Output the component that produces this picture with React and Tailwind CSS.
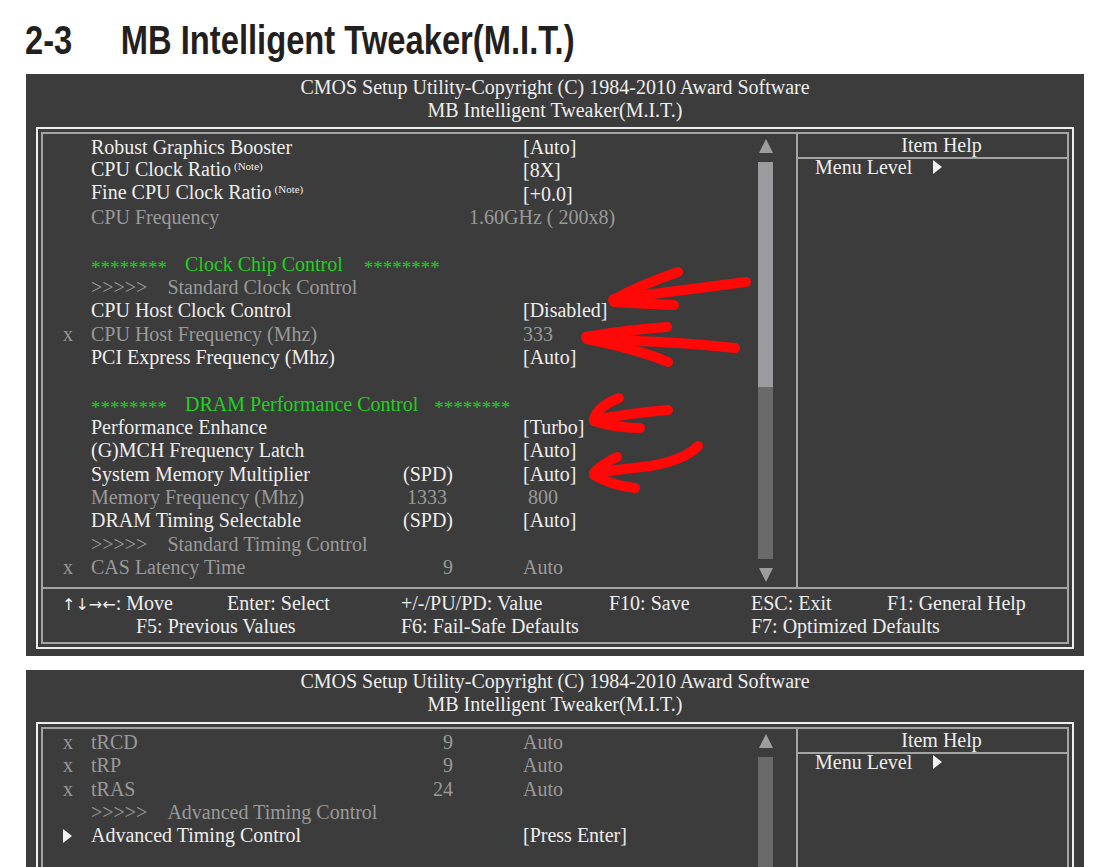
import React from "react";

const WHITE = "text-[#eeeeee]";
const GREY = "text-[#9a9a9a]";
const GREEN = "text-[#1ed21e]";

function TriRight({ className = "" }) {
  return (
    <svg className={className} width="9" height="14" viewBox="0 0 9 14">
      <path d="M0 0 L9 7 L0 14 Z" fill="#f2f2f2" />
    </svg>
  );
}

function Row({ marker, label, note, mid, midCls = "", value, valCls = "", tone = "w" }) {
  const c = tone === "g" ? GREY : WHITE;
  return (
    <div className={`flex h-[23.33px] items-center leading-[23.33px] whitespace-nowrap ${c}`}>
      <div className="w-[20px]" />
      <div className="flex w-[28px] items-center">
        {marker === "x" ? "x" : marker === "tri" ? <TriRight /> : null}
      </div>
      <div className="w-[289px]">
        {label}
        {note && <span className="relative -top-[6px] ml-[3px] text-[11px]">(Note)</span>}
      </div>
      <div className={`w-[73px] text-right ${midCls}`}>{mid}</div>
      <div className="w-[70px]" />
      <div className={valCls}>{value}</div>
    </div>
  );
}

function GreenRow({ title, gap }) {
  return (
    <div className={`flex h-[23.33px] items-center leading-[23.33px] whitespace-nowrap ${GREEN}`}>
      <div className="w-[48px]" />
      <span className="relative top-[3px] text-[19px]">********</span>
      <span className="ml-[18px]">{title}</span>
      <span className={`relative top-[3px] text-[19px] ${gap}`}>********</span>
    </div>
  );
}

function SubRow({ title }) {
  return (
    <div className={`flex h-[23.33px] items-center leading-[23.33px] whitespace-nowrap ${GREY}`}>
      <div className="w-[48px]" />
      <span>&gt;&gt;&gt;&gt;&gt;</span>
      <span className="ml-[20px]">{title}</span>
    </div>
  );
}

function Blank() {
  return <div className="h-[23.33px]" />;
}

function Scroll({ thumbCls }) {
  return (
    <div className="flex w-[15px] flex-col items-center pt-[5px]">
      <svg width="14" height="14" viewBox="0 0 14 14">
        <path d="M7 0 L14 14 L0 14 Z" fill="#9d9d9d" />
      </svg>
      <div className="mt-[9px] flex h-[397px] w-[15px] flex-col bg-[#6a6a6a]">
        <div className={`w-full bg-[#9c9c9f] ${thumbCls}`} />
      </div>
      <svg className="mt-[9px]" width="14" height="14" viewBox="0 0 14 14">
        <path d="M0 0 L14 0 L7 14 Z" fill="#9d9d9d" />
      </svg>
    </div>
  );
}

function Help() {
  return (
    <div className={`flex flex-1 flex-col border-l-2 border-[#a3a3a3] ${WHITE}`}>
      <div className="h-[25px] border-b-2 border-[#a3a3a3] pl-[18px] text-center leading-[23px]">
        Item Help
      </div>
      <div className="flex h-[16px] items-center pl-[17px] leading-[16px]">
        <span>Menu Level</span>
        <TriRight className="ml-[21px]" />
      </div>
    </div>
  );
}

function Panel({ headCls, gapCls, rows, thumbCls, footer, bodyCls }) {
  return (
    <div className={`ml-[26px] w-[1058px] bg-[#3c3c3c] px-[10px] pb-[7px] ${headCls}`}>
      <div className={`text-center leading-[23px] ${WHITE}`}>
        <div>CMOS Setup Utility-Copyright (C) 1984-2010 Award Software</div>
        <div>MB Intelligent Tweaker(M.I.T.)</div>
      </div>
      <div className={`${gapCls} border-2 border-[#ededed] p-[3px]`}>
        <div className="border-2 border-[#a3a3a3]">
          <div className={`flex ${bodyCls}`}>
            <div className="w-[715px] pt-[2px]">{rows}</div>
            <Scroll thumbCls={thumbCls} />
            <div className="w-[23px]" />
            <Help />
          </div>
          {footer && (
            <div className={`border-t-2 border-[#a3a3a3] pt-[3px] pb-[4px] leading-[23px] whitespace-nowrap ${WHITE}`}>
              <div className="flex h-[23px] pl-[19px]">
                <span className="w-[165px]">
                  <span className="font-['DejaVu_Sans',sans-serif] text-[16px]">↑↓→←</span>: Move
                </span>
                <span className="w-[174px]">Enter: Select</span>
                <span className="w-[208px]">+/-/PU/PD: Value</span>
                <span className="w-[142px]">F10: Save</span>
                <span className="w-[136px]">ESC: Exit</span>
                <span>F1: General Help</span>
              </div>
              <div className="flex h-[23px] pl-[93px]">
                <span className="w-[265px]">F5: Previous Values</span>
                <span className="w-[350px]">F6: Fail-Safe Defaults</span>
                <span>F7: Optimized Defaults</span>
              </div>
            </div>
          )}
        </div>
      </div>
    </div>
  );
}

function RedArrows() {
  const s = {
    stroke: "#ff0808",
    strokeWidth: 10,
    fill: "none",
    strokeLinecap: "round",
    strokeLinejoin: "round",
  };
  return (
    <svg className="pointer-events-none absolute left-0 top-0" width="1112" height="867" viewBox="0 0 1112 867">
      <g {...s}>
        <path d="M746 282 Q 690 289 614 299" />
        <path d="M678 272 Q 640 285 613 300" />
        <path d="M614 302 Q 645 304 674 305" />

        <path d="M735 348 Q 690 343 640 341 Q 610 339 586 337" />
        <path d="M667 327 Q 625 330 586 337" />
        <path d="M587 339 Q 640 350 668 362" />

        <path d="M668 410 Q 630 413 595 420" />
        <path d="M619 398 Q 600 405 594 418" />
        <path d="M594 421 Q 615 428 640 428" />

        <path d="M698 446 Q 685 460 650 466 Q 615 470 594 473" />
        <path d="M617 457 Q 602 464 594 473" />
        <path d="M594 475 Q 610 485 635 488" />
      </g>
    </svg>
  );
}

export default function App() {
  const rows1 = (
    <>
      <Row label="Robust Graphics Booster" value="[Auto]" />
      <Row label="CPU Clock Ratio" note value="[8X]" />
      <Row label="Fine CPU Clock Ratio" note value="[+0.0]" />
      <Row tone="g" label="CPU Frequency" value="1.60GHz ( 200x8)" valCls="-ml-[54px]" />
      <Blank />
      <GreenRow title="Clock Chip Control" gap="ml-[21px]" />
      <SubRow title="Standard Clock Control" />
      <Row label="CPU Host Clock Control" value="[Disabled]" />
      <Row tone="g" marker="x" label="CPU Host Frequency (Mhz)" value="333" />
      <Row label="PCI Express Frequency (Mhz)" value="[Auto]" />
      <Blank />
      <GreenRow title="DRAM Performance Control" gap="ml-[16px]" />
      <Row label="Performance Enhance" value="[Turbo]" />
      <Row label="(G)MCH Frequency Latch" value="[Auto]" />
      <Row label="System Memory Multiplier" mid="(SPD)" value="[Auto]" />
      <Row tone="g" label="Memory Frequency (Mhz)" mid="1333" midCls="pr-[6px]" value="800" valCls="pl-[5px]" />
      <Row label="DRAM Timing Selectable" mid="(SPD)" value="[Auto]" />
      <SubRow title="Standard Timing Control" />
      <Row tone="g" marker="x" label="CAS Latency Time" mid="9" value="Auto" />
    </>
  );

  const rows2 = (
    <>
      <Row tone="g" marker="x" label="tRCD" mid="9" value="Auto" />
      <Row tone="g" marker="x" label="tRP" mid="9" value="Auto" />
      <Row tone="g" marker="x" label="tRAS" mid="24" value="Auto" />
      <SubRow title="Advanced Timing Control" />
      <Row marker="tri" label="Advanced Timing Control" value="[Press Enter]" />
    </>
  );

  return (
    <div className="relative h-[867px] w-[1112px] overflow-hidden bg-white font-['Liberation_Serif','Times_New_Roman',serif] text-[20px]">
      <div className="h-[74px] pl-[25px] pt-[20px]">
        <div className="origin-left scale-x-[0.798] whitespace-nowrap font-['Liberation_Sans',Arial,sans-serif] text-[41px] leading-[41px] font-bold text-[#231f20]">
          <span className="inline-block w-[120px]">2-3</span>
          <span>MB Intelligent Tweaker(M.I.T.)</span>
        </div>
      </div>
      <Panel headCls="pt-[2px]" gapCls="mt-[5px]" rows={rows1} thumbCls="h-[225px]" footer bodyCls="h-[453px]" />
      <div className="h-[14px]" />
      <Panel headCls="pt-0" gapCls="mt-[6px]" rows={rows2} thumbCls="h-0" bodyCls="h-[453px]" />
      <RedArrows />
    </div>
  );
}
